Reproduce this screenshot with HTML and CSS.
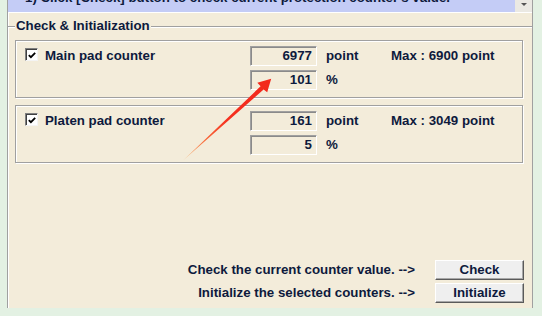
FILE: index.html
```html
<!DOCTYPE html>
<html lang="en">
<head>
<meta charset="UTF-8">
<meta name="viewport" content="width=device-width, initial-scale=1.0">
<title>Protection Counter</title>
<link rel="stylesheet" href="styles.css">
</head>
<body>

<div class="panel">
  <div class="banner">
    <div class="banner-text"><span>1) Click [Check] button to check current protection counter's value.</span></div>
    <div class="banner-scroll"><span class="arrow-down"></span></div>
  </div>

  <div class="legend"><span class="legend-text">Check &amp; Initialization</span></div>

  <div class="counter-box">
    <div class="check-label">
      <span class="checkbox"><svg width="11" height="11" viewBox="0 0 11 11"><path d="M2 5 L4.3 7.3 L9 2.6" fill="none" stroke="#000" stroke-width="2"/></svg></span>
      <span>Main pad counter</span>
    </div>
    <div class="field">6977</div>
    <div>point</div>
    <div>Max : 6900 point</div>
    <div></div>
    <div class="field">101</div>
    <div>%</div>
    <div></div>
  </div>

  <div class="counter-box second">
    <div class="check-label">
      <span class="checkbox"><svg width="11" height="11" viewBox="0 0 11 11"><path d="M2 5 L4.3 7.3 L9 2.6" fill="none" stroke="#000" stroke-width="2"/></svg></span>
      <span>Platen pad counter</span>
    </div>
    <div class="field">161</div>
    <div>point</div>
    <div>Max : 3049 point</div>
    <div></div>
    <div class="field">5</div>
    <div>%</div>
    <div></div>
  </div>

  <div class="actions">
    <div class="action-label">Check the current counter value. --&gt;</div>
    <button class="btn">Check</button>
    <div class="action-label">Initialize the selected counters. --&gt;</div>
    <button class="btn">Initialize</button>
  </div>
</div>

<svg class="pointer" width="542" height="316" viewBox="0 0 542 316">
  <defs>
    <linearGradient id="arrowFade" x1="183" y1="160" x2="271" y2="79" gradientUnits="userSpaceOnUse">
      <stop offset="0" stop-color="#f7c58a"/>
      <stop offset="0.25" stop-color="#f86a3a"/>
      <stop offset="0.5" stop-color="#f5301f"/>
      <stop offset="1" stop-color="#f2281c"/>
    </linearGradient>
  </defs>
  <polygon points="183,160.5 260.6,86.3 257.3,82.8 271.2,78.8 267.2,92.2 263.6,89.6" fill="url(#arrowFade)"/>
</svg>

</body>
</html>
```

FILE: styles.css
```css
* {
  box-sizing: border-box;
}
body {
  margin: 0;
  height: 316px;
  overflow: hidden;
  background-color: #e3f1e3;
  font-family: "Liberation Sans", Arial, sans-serif;
  font-size: 13.3px;
  font-weight: bold;
  color: #0e1a3d;
}
.panel {
  margin-left: 7px;
  width: 526px;
  height: 308px;
  background-color: #f3ecda;
  border-left: 1px solid #a0a0a0;
  border-right: 1px solid #a0a0a0;
  box-shadow: inset 1px 0 0 #ffffff;
  display: flex;
  flex-direction: column;
}
.banner {
  display: flex;
  height: 13px;
  border-bottom: 1px solid #ffffff;
  overflow: hidden;
}
.banner-text {
  flex: 1;
  background-color: #c4ccf6;
  padding-left: 17px;
  line-height: 16px;
}
.banner-text span {
  display: block;
  margin-top: -10px;
}
.banner-scroll {
  width: 17px;
  background-color: #ebe9e3;
  display: flex;
  justify-content: center;
  padding-top: 3px;
}
.arrow-down {
  width: 0;
  height: 0;
  border-left: 3px solid transparent;
  border-right: 3px solid transparent;
  border-top: 3px solid #555;
}
.legend {
  display: flex;
  align-items: center;
  margin-top: 5px;
  height: 16px;
  line-height: 16px;
}
.legend::before, .legend::after {
  content: "";
  height: 1px;
  background-color: #a0a0a0;
  box-shadow: 0 1px 0 #ffffff;
}
.legend::before {
  width: 7px;
}
.legend::after {
  flex: 1;
}
.legend-text {
  padding: 0 1px;
}
.counter-box {
  margin: 6px 9px 0 7px;
  height: 58px;
  border: 1px solid #a0a0a0;
  box-shadow: 1px 1px 0 #ffffff, inset 1px 1px 0 #ffffff;
  padding: 5px 0 0 9px;
  display: grid;
  grid-template-columns: 225px 76px 65px 1fr;
  grid-template-rows: 20px 20px;
  row-gap: 4px;
  align-items: center;
  line-height: 20px;
}
.counter-box.second {
  margin-top: 7px;
}
.check-label {
  display: flex;
  align-items: flex-start;
  gap: 7px;
  align-self: stretch;
}
.checkbox {
  width: 13px;
  height: 13px;
  margin-top: 2px;
  background-color: #ffffff;
  border: 1px solid;
  border-color: #808080 #f4f4f4 #f4f4f4 #808080;
  box-shadow: inset 1px 1px 0 #404040;
  display: flex;
  align-items: center;
  justify-content: center;
  padding: 1px 0 0 1px;
}
.checkbox svg {
  display: block;
}
.field {
  width: 67px;
  height: 20px;
  border: 1px solid;
  border-color: #a0a0a0 #ffffff #ffffff #a0a0a0;
  box-shadow: inset 1px 1px 0 #8a8a8a;
  text-align: right;
  padding-right: 4px;
  line-height: 18px;
}
.actions {
  margin-top: 97px;
  display: grid;
  grid-template-columns: 1fr 89px;
  grid-template-rows: 20px 20px;
  column-gap: 20px;
  row-gap: 3px;
  padding-right: 8px;
  line-height: 20px;
}
.action-label {
  text-align: right;
}
.btn {
  height: 20px;
  padding: 0;
  font-family: inherit;
  font-size: 13.3px;
  font-weight: bold;
  color: #0e1a3d;
  line-height: 18px;
  background-color: #efefef;
  border: 1px solid;
  border-color: #ffffff #5a5a5a #5a5a5a #ffffff;
  box-shadow: inset -1px -1px 0 #a8a8a8;
}
.pointer {
  position: absolute;
  top: 0;
  left: 0;
  pointer-events: none;
}
```
